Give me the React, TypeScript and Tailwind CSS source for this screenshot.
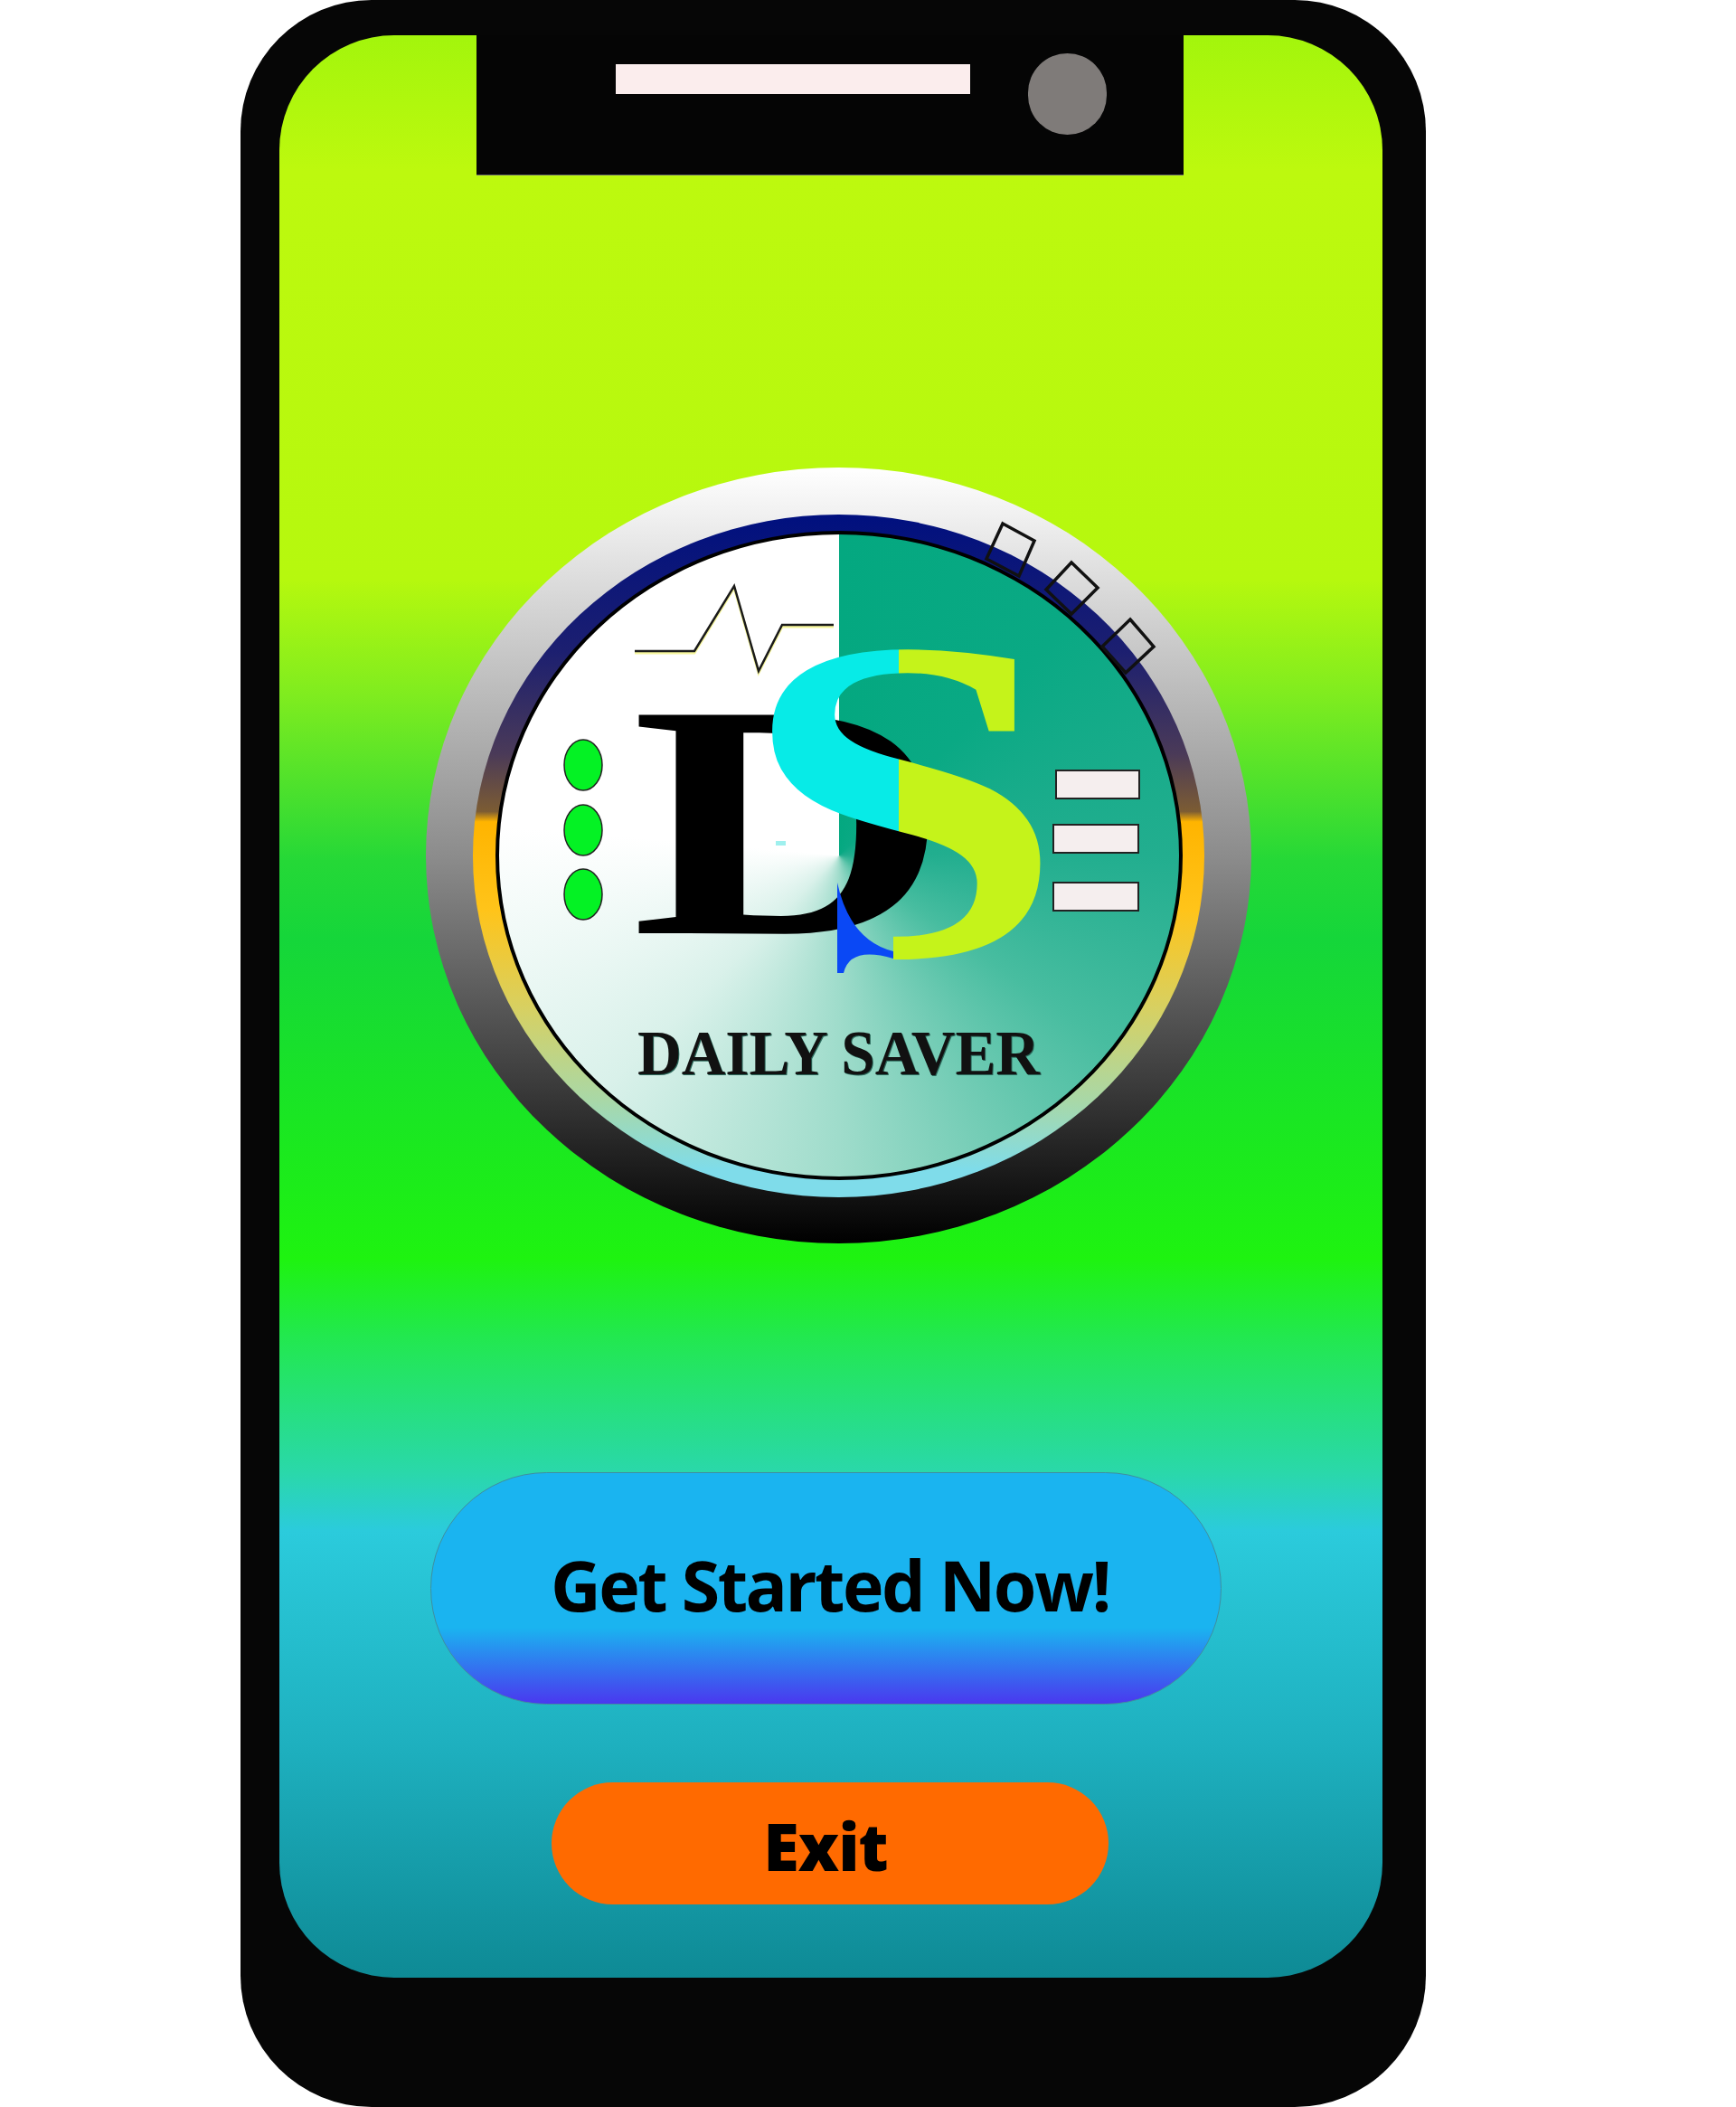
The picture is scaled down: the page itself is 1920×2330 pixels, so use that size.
export default function App() {
  return (
    <div className="w-[1920px] h-[2330px] bg-white overflow-hidden font-['Open_Sans',sans-serif]">
      <div className="ml-[266px] w-[1311px] h-[2330px] rounded-[145px] bg-[#060606] pt-[39px] pl-[43px]">
        <Screen />
      </div>
    </div>
  )
}

function Screen() {
  return (
    <div className="w-[1220px] h-[2148px] rounded-[127px] overflow-hidden bg-[linear-gradient(180deg,#a3f50c_0%,#bdf90e_7%,#b6f80e_28%,#7fec1f_34%,#25d837_42.5%,#15d63a_46.6%,#1ef310_63%,#22e84f_67%,#2ad8aa_74%,#2bcbdc_77%,#1eb0bf_88%,#0e8a95_100%)]">
      {/* Notch */}
      <div className="ml-[218px] w-[782px] h-[155px] bg-[#050505] border-b border-[#666] flex items-start pl-[154px] pt-[32px]">
        <div className="w-[392px] h-[33px] bg-[#fbeded]"></div>
        <div className="ml-[64px] -mt-[12px] w-[87px] h-[90px] rounded-full bg-[#7f7b79]"></div>
      </div>

      <div className="mt-[323px] ml-[162px]">
        <Logo />
      </div>

      <button className="block mt-[253px] ml-[167px] w-[875px] h-[257px] rounded-full border border-[#3f8f9f] bg-[linear-gradient(180deg,#1ab4f0_0%,#1ab4f0_67%,#4a38ef_100%)] pb-[8px] pl-[9px] text-[77px] font-bold text-black tracking-[-2.5px]">
        Get Started Now!
      </button>

      <button className="block mt-[86px] ml-[301px] w-[616px] h-[135px] rounded-full bg-[#ff6a00] pt-[5px] pr-[10px] text-[72px] leading-none font-extrabold text-black tracking-[-1px]">
        Exit
      </button>
    </div>
  )
}

function Logo() {
  return (
    <div className="relative w-[913px] h-[858px] rounded-[50%] bg-[linear-gradient(180deg,#ffffff_0%,#e2e2e2_12%,#8c8c8c_50%,#3a3a3a_80%,#000000_100%)] flex items-center justify-center">
      <div className="w-[809px] h-[755px] rounded-[50%] bg-[linear-gradient(180deg,#00107f_0%,#1c1f70_20%,#4a3a58_35%,#7c5c33_43.5%,#ffb400_45%,#ffc41a_58%,#d8d060_72%,#a8d8a8_86%,#7fdcea_96%)] flex items-center justify-center">
        <div className="w-[760px] h-[718px] rounded-[50%] border-[4px] border-black bg-[conic-gradient(from_0deg_at_50%_50%,#04a880_0deg,#0aa984_45deg,#22ae8f_90deg,#48bda0_125deg,#9fdccb_180deg,#d9f1ea_225deg,#ffffff_275deg,#ffffff_360deg)]"></div>
      </div>

      <svg className="absolute inset-0" width="913" height="858" viewBox="471 517 913 858">
        <defs>
          <pattern id="sFill" patternUnits="userSpaceOnUse" x="0" y="0" width="2000" height="2000">
            <rect x="471" y="517" width="913" height="858" fill="#c5f31a" />
            <rect x="471" y="517" width="523" height="428" fill="#07ebe7" />
          </pattern>
          <clipPath id="sClip">
            <polygon points="800,650 1200,650 1200,1100 988,1100 988,945 800,945" />
          </clipPath>
        </defs>

        {/* status ticks on the ring */}
        <g fill="none" stroke="#111" strokeWidth="3.5">
          <polygon points="1109,579 1144,598 1127,637 1091,618" />
          <polygon points="1185,622 1214,650 1185,679 1157,652" />
          <polygon points="1250,685 1276,715 1245,744 1219,715" />
        </g>

        {/* pulse line */}
        <polyline points="702,722 768,722 812,650 839,744 865,693 922,693" fill="none" stroke="#f6f69c" strokeWidth="3" />
        <polyline points="702,720 768,720 812,648 839,742 865,691 922,691" fill="none" stroke="#1a1a1a" strokeWidth="2.5" />

        {/* dots */}
        <g fill="#04f224" stroke="#222" strokeWidth="1.5">
          <ellipse cx="645" cy="846" rx="21" ry="28" />
          <ellipse cx="645" cy="918" rx="21" ry="28" />
          <ellipse cx="645" cy="989" rx="21" ry="28" />
        </g>

        {/* menu bars */}
        <g fill="#f5eeee" stroke="#222" strokeWidth="2">
          <rect x="1168" y="852" width="92" height="31" />
          <rect x="1165" y="912" width="94" height="31" />
          <rect x="1165" y="976" width="94" height="31" />
        </g>

        <text x="698" y="1032" fontFamily="'Liberation Serif',serif" fontWeight="700" fontSize="369" textLength="352" lengthAdjust="spacingAndGlyphs" fill="#000">D</text>
        <rect x="858" y="930" width="11" height="5" fill="#9ff0ee" />
        <g clipPath="url(#sClip)">
          <text x="817" y="1056" fontFamily="'Liberation Serif',serif" fontWeight="700" fontSize="510" textLength="361" lengthAdjust="spacingAndGlyphs" fill="url(#sFill)">S</text>
        </g>
        {/* blue spur under the S */}
        <path d="M926 976 Q940 1040 988 1052 L988 1060 Q940 1046 933 1076 L926 1076 Z" fill="#0a48f5" />

        <text x="705" y="1188" className="drop-shadow-[1.5px_1px_0_#2c6a5c]" fontFamily="'Liberation Serif',serif" fontWeight="700" fontSize="70" textLength="445" lengthAdjust="spacingAndGlyphs" fill="#111">DAILY SAVER</text>
      </svg>
    </div>
  )
}
